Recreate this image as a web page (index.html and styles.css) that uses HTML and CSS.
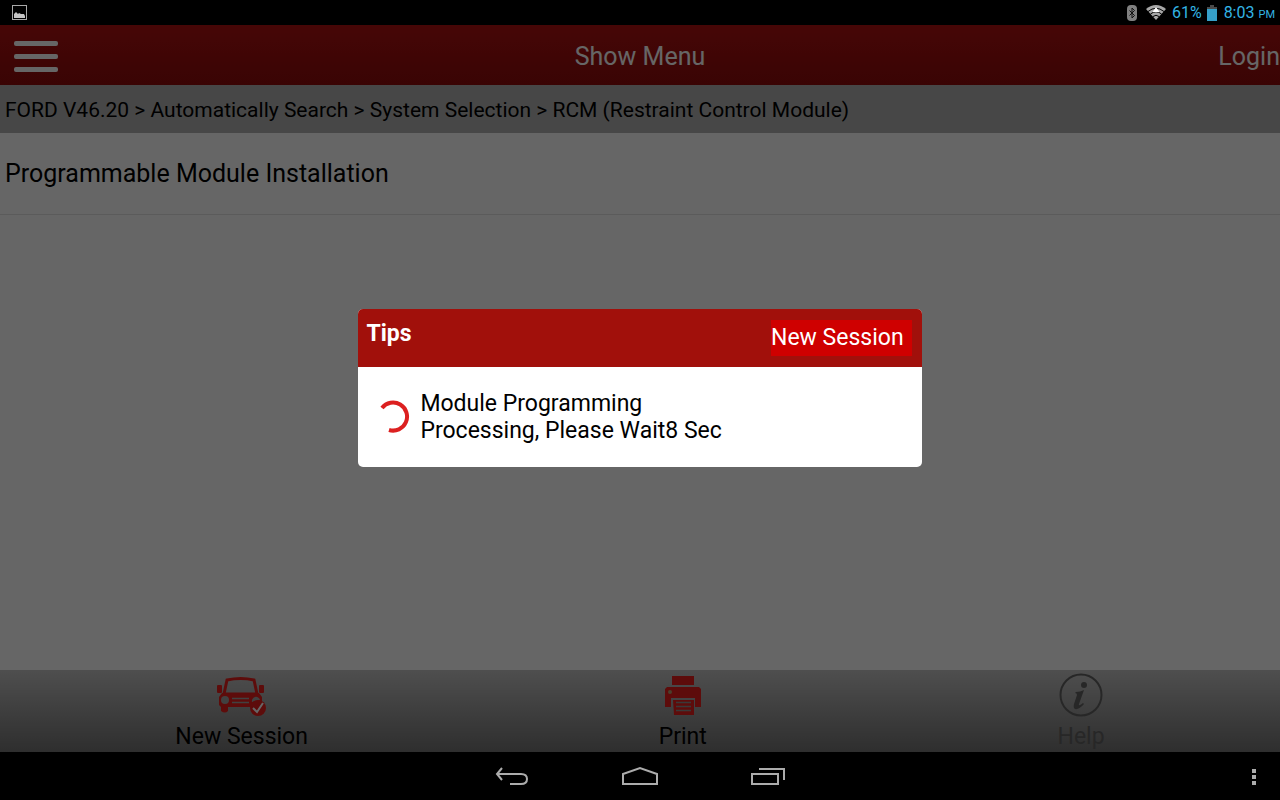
FILE: index.html
```html
<!DOCTYPE html>
<html lang="en">
<head>
    <meta charset="UTF-8">
    <meta name="viewport" content="width=device-width, initial-scale=1.0">
    <title>Programmable Module Installation</title>
    <link rel="stylesheet" href="styles.css">
</head>
<body>

    <div class="status-bar">
        <svg class="status-picture" width="15" height="15" viewBox="0 0 15 15">
            <rect x="0.5" y="0.5" width="14" height="14" fill="none" stroke="#a8a8a8"/>
            <path d="M2 13V9l2-2 2 2 1-1 2 1h3l1 2v2z" fill="#c4c4c4"/>
        </svg>
        <div class="status-right">
            <svg width="10" height="16" viewBox="0 0 10 16">
                <rect width="10" height="16" rx="4" fill="#808080"/>
                <path d="M2.5 5.5l5 5L5 13V3l2.500 2.500-5 5" fill="none" stroke="#111"/>
            </svg>
            <svg class="status-wifi" width="20" height="15" viewBox="0 0 20 15">
                <path d="M0 4Q10-4 20 4L10 15z" fill="#a8a8a8"/>
                <path d="M2 6.500Q10 0 18 6.500M4.500 9Q10 4.500 15.500 9M7 11.500Q10 9 13 11.500" fill="none" stroke="#000"/>
                <path d="M10 2l3.500 5h-7z" fill="#fff"/>
            </svg>
            <span class="status-percent">61%</span>
            <svg width="10" height="16" viewBox="0 0 10 16">
                <path d="M3 0h4v2h3v3H0V2h3z" fill="#4a4a4a"/>
                <path d="M0 4h10v12H0z" fill="#36a0c8"/>
            </svg>
            <span class="status-time">8:03 <small>PM</small></span>
        </div>
    </div>

    <div class="app">
        <header class="header">
            <button type="button" class="btn-menu" aria-label="Menu">
                <span></span><span></span><span></span>
            </button>
            <h1>Show Menu</h1>
            <a href="#" class="link-login">Login</a>
        </header>

        <nav class="breadcrumb">FORD V46.20 &gt; Automatically Search &gt; System Selection &gt; RCM (Restraint Control Module)</nav>

        <main>
            <a href="#" class="item">Programmable Module Installation</a>
        </main>

        <footer class="toolbar">
            <button type="button" class="tool">
                <svg width="50" height="44" viewBox="0 0 50 44">
                    <path d="M7 21L10 7Q24 4 37 7l3 14z" fill="none" stroke="#e8201c" stroke-width="3"/>
                    <rect y="12" width="5" height="8" rx="1" fill="#e8201c"/>
                    <rect x="42" y="12" width="5" height="8" rx="1" fill="#e8201c"/>
                    <path d="M5 20h37l3 4v10H11v4q-3 3-7 0v-4l-2-2v-8z" fill="#e8201c"/>
                    <circle cx="8" cy="27" r="4" fill="#a3a3a3"/>
                    <path d="M35 29a4 4 0 1 1 8-2z" fill="#a3a3a3"/>
                    <path d="M15 25.500h17M15 29.500h17" stroke="#a3a3a3" stroke-width="1.500"/>
                    <circle cx="41" cy="35" r="8" fill="#e8201c"/>
                    <path d="M36 35l4 4 6-9" fill="none" stroke="#fff" stroke-width="2"/>
                </svg>
                <span>New Session</span>
            </button>
            <button type="button" class="tool">
                <svg width="38" height="44" viewBox="0 0 38 44">
                    <rect x="8" y="3" width="22" height="9" fill="#e8201c"/>
                    <path d="M3 14h32l2 2v18h-6v-9H7v9H1V16z" fill="#e8201c"/>
                    <circle cx="6" cy="19" r="2" fill="#b8a070"/>
                    <path d="M9 27h21v15H10z" fill="#e8201c"/>
                    <path d="M12 29.500h15M12 33.500h15M12 37.500h15" stroke="#909090" stroke-width="1.500"/>
                </svg>
                <span>Print</span>
            </button>
            <button type="button" class="tool tool-off">
                <svg width="44" height="44" viewBox="0 0 44 44">
                    <circle cx="22" cy="22" r="20.500" fill="none" stroke="currentColor" stroke-width="2"/>
                    <circle cx="25" cy="12" r="3" fill="currentColor"/>
                    <path d="M17 19q4 0 8-2l-5 14q-1 3 4-1l1 1q-5 6-9 5-2-1-1-5l3-9q0-2-2-2z" fill="currentColor"/>
                </svg>
                <span>Help</span>
            </button>
        </footer>

        <div class="overlay">
            <div class="dialog" role="dialog" aria-labelledby="dialogTitle">
                <div class="dialog-head">
                    <h2 id="dialogTitle">Tips</h2>
                    <button type="button" class="btn-session">New Session</button>
                </div>
                <div class="dialog-body">
                    <svg width="32" height="34" viewBox="0 0 32 34">
                        <path d="M4 8A14 14 0 1 1 11 30" fill="none" stroke="#dc2020" stroke-width="4"/>
                    </svg>
                    <p>Module Programming<br>Processing, Please Wait8 Sec</p>
                </div>
            </div>
        </div>
    </div>

    <div class="nav-bar">
        <button type="button" class="nav-btn" aria-label="Back">
            <svg width="34" height="20" viewBox="0 0 34 20">
                <path d="M7 2L2 8l5 6M2 8h24q6 0 6 5t-6 5H15" fill="none" stroke="#acacac" stroke-width="2"/>
            </svg>
        </button>
        <button type="button" class="nav-btn" aria-label="Home">
            <svg width="36" height="20" viewBox="0 0 36 20">
                <path d="M1 18V8l17-6 17 6v10z" fill="none" stroke="#acacac" stroke-width="2"/>
            </svg>
        </button>
        <button type="button" class="nav-btn" aria-label="Recent apps">
            <svg width="34" height="20" viewBox="0 0 34 20">
                <path d="M1 8h26v10H1zM8 3h25v11" fill="none" stroke="#acacac" stroke-width="2"/>
            </svg>
        </button>
        <button type="button" class="nav-more" aria-label="More options">
            <svg width="4" height="20" viewBox="0 0 4 20">
                <path d="M0 3h4v4H0zM0 9h4v4H0zM0 15h4v4H0z" fill="#acacac"/>
            </svg>
        </button>
    </div>

</body>
</html>
```
FILE: styles.css
```css
* { box-sizing: border-box; }
body { margin: 0; min-height: 100vh; display: flex; flex-direction: column; font-family: Roboto, sans-serif; background: #000; color: #000; }
svg { display: block; flex: none; }
button { font: inherit; color: inherit; background: none; border: none; padding: 0; cursor: pointer; }
a { color: inherit; text-decoration: none; }

.status-bar { display: flex; justify-content: space-between; align-items: center; height: 25px; padding: 0 5px 0 12px; background: #000; color: #33b5e5; font-size: 16px; }
.status-right { display: flex; align-items: center; gap: 5px; }
.status-wifi { margin: 0 1px 0 4px; }
.status-time { margin-left: 2px; }
.status-time small { font-size: 11px; }

.app { position: relative; flex: 1; display: flex; flex-direction: column; background: #fff; }
.header { display: grid; grid-template-columns: 1fr auto 1fr; align-items: center; height: 60px; padding-top: 2px; background: linear-gradient(#b01010, #900c0c); color: #fff; font-size: 25px; }
.header h1 { margin: 0; font-size: 25px; font-weight: normal; }
.btn-menu { display: flex; flex-direction: column; gap: 8px; width: 58px; padding-left: 14px; }
.btn-menu span { height: 5px; border-radius: 2px; background: #fff; }
.link-login { justify-self: end; }
.breadcrumb { height: 48px; padding: 0 5px; line-height: 50px; font-size: 21px; background: #b2b2b2; }
main { flex: 1; }
.item { display: block; padding: 1px 5px 0; line-height: 80px; font-size: 25px; border-bottom: 1px solid #e4e4e4; }

.toolbar { display: flex; justify-content: space-around; height: 82px; padding-top: 3px; background: linear-gradient(#c4c4c4, #747474); }
.tool { display: flex; flex-direction: column; align-items: center; font-size: 23px; line-height: 28px; gap: 6px; }
.tool-off { color: #626262; }

.overlay { position: absolute; inset: 0; display: flex; align-items: center; justify-content: center; padding-bottom: 2px; background: rgba(0, 0, 0, 0.6); }
.dialog { width: 44%; min-width: 360px; border-radius: 5px; overflow: hidden; background: #fff; }
.dialog-head { display: flex; justify-content: space-between; align-items: center; height: 58px; padding: 0 10px 0 8px; background: #a1100b; color: #fff; }
.dialog-head h2 { margin: 0 0 8px; font-size: 23px; font-weight: bold; }
.btn-session { height: 36px; padding: 0 8px 0 0; font-size: 23px; background: #cf0000; }
.dialog-body { display: flex; align-items: center; gap: 10px; height: 100px; padding: 0 20px; }
.dialog-body p { margin: 0; font-size: 23px; line-height: 27px; }

.nav-bar { display: grid; grid-template-columns: 1fr 128px 128px 128px 1fr; align-items: center; height: 48px; background: #000; }
.nav-btn { display: flex; justify-content: center; }
.nav-btn:first-child { grid-column: 2; }
.nav-more { justify-self: end; padding: 0 24px; }
```
